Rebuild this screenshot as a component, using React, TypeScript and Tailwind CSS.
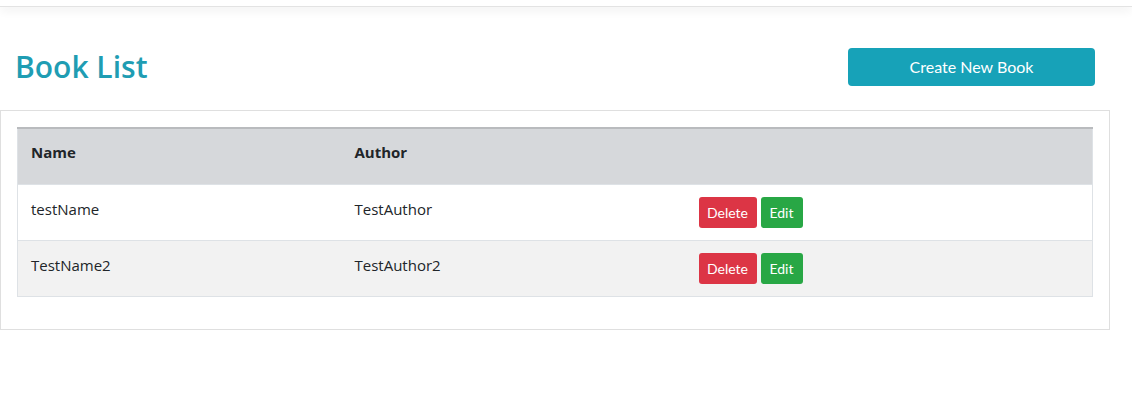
const books = [
  { id: 1, name: "testName", author: "TestAuthor" },
  { id: 2, name: "TestName2", author: "TestAuthor2" },
];

export default function App() {
  return (
    <div className="min-h-[408px] bg-white text-[#212529] font-['Open_Sans',sans-serif]">
      <div className="h-[7px] border-b border-[#e3e3e3] shadow-[0_4px_10px_rgba(0,0,0,0.06)]" />

      <div className="w-[1110px]">
        <div className="flex items-center justify-between px-[15px] pt-[40px] pb-[23px]">
          <h1 className="text-[30px] leading-[40px] font-semibold text-[#1f9db3]">Book List</h1>
          <button className="w-[247px] h-[38px] rounded-[4px] bg-[#17a2b8] text-white text-[16px] font-['Lato',sans-serif]">
            Create New Book
          </button>
        </div>

        <div className="border border-[#dfdfdf] p-4 pb-[32px]">
          <table className="w-full border-collapse border border-[#dee2e6] text-[15px]">
            <thead>
              <tr className="bg-[#d6d8db] border-t-2 border-[#b9bbbe]">
                <th className="w-[324px] h-[56px] px-[13px] pb-[8px] text-left font-bold">Name</th>
                <th className="w-[344px] px-[13px] pb-[8px] text-left font-bold">Author</th>
                <th className="px-[13px]" />
              </tr>
            </thead>
            <tbody>
              {books.map((b, i) => (
                <tr
                  key={b.id}
                  className={`border-t border-[#dee2e6] ${i % 2 === 1 ? "bg-[#f2f2f2]" : "bg-white"}`}
                >
                  <td className="h-[56px] px-[13px] pb-[6px]">{b.name}</td>
                  <td className="px-[13px] pb-[6px]">{b.author}</td>
                  <td className="px-[13px]">
                    <div className="flex gap-[4px] font-['Lato',sans-serif] text-[14px] text-white">
                      <button className="h-[31px] w-[58px] rounded-[3px] bg-[#dc3545]">Delete</button>
                      <button className="h-[31px] w-[42px] rounded-[3px] bg-[#28a745]">Edit</button>
                    </div>
                  </td>
                </tr>
              ))}
            </tbody>
          </table>
        </div>
      </div>
    </div>
  );
}
